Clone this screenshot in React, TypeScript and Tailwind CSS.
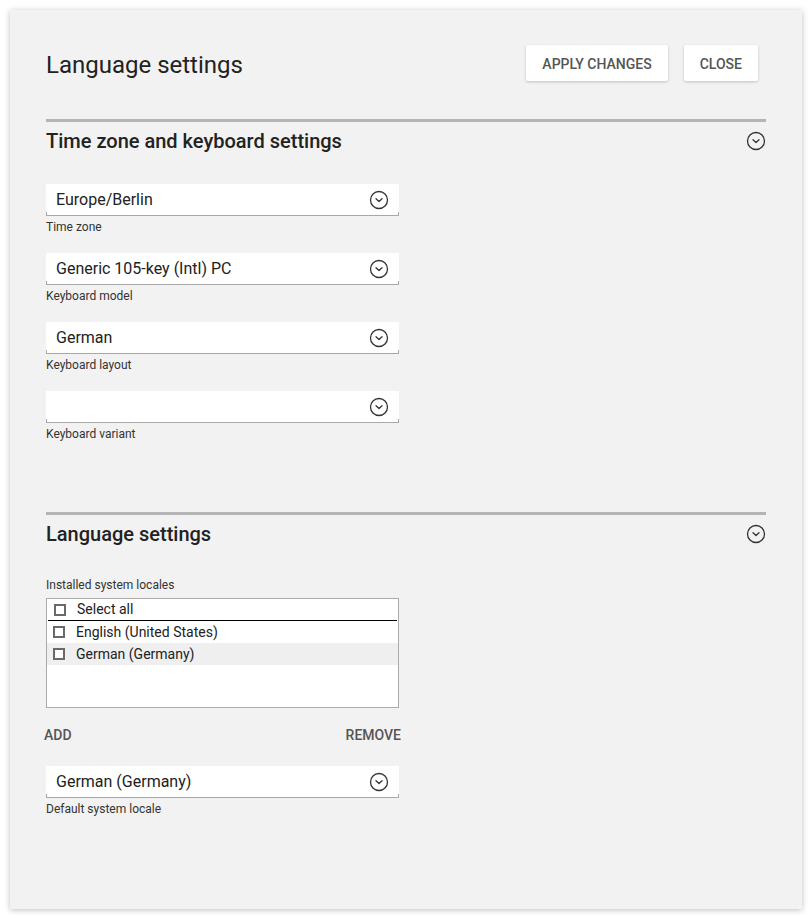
import React from "react";

function ChevronCircle() {
  return (
    <svg width="20" height="20" viewBox="0 0 20 20" fill="none">
      <circle cx="10" cy="10" r="8.5" stroke="#333" strokeWidth="1.3" />
      <path d="M7 8.8 L10 11.6 L13 8.8" stroke="#333" strokeWidth="1.3" strokeLinecap="round" strokeLinejoin="round" />
    </svg>
  );
}

function Select({ value, label }: { value: string; label: string }) {
  return (
    <div className="flex flex-col w-[353px]">
      <div className="flex flex-col bg-white">
        <div className="flex items-center justify-between h-[28px] pt-[3px] pl-[10px] pr-[10px] text-[16px] text-[#222]">
          <span>{value}</span>
          <ChevronCircle />
        </div>
        <div className="h-[4px] border-x border-b border-[#a8a8a8]" />
      </div>
      <div className="mt-[3px] h-4 text-[12px] leading-4 text-[#333]">{label}</div>
    </div>
  );
}

function SectionHeader({ title }: { title: string }) {
  return (
    <div className="flex flex-col">
      <div className="h-[3px] bg-[#b5b5b5]" />
      <div className="flex items-center justify-between h-[38px]">
        <span className="text-[20px] font-medium text-[#222]">{title}</span>
        <ChevronCircle />
      </div>
    </div>
  );
}

function Checkbox() {
  return <div className="w-[12px] h-[12px] border-2 border-[#6a6a6a] bg-white" />;
}

function LocaleRow({ text, selected, divider }: { text: string; selected?: boolean; divider?: boolean }) {
  return (
    <div
      className={`flex items-center h-[22px] pl-[6px] gap-[11px] text-[14px] text-[#222] ${
        selected ? "bg-[#efefef]" : ""
      } ${divider ? "border-b border-black mx-[1px] pl-[5px]" : ""}`}
    >
      <Checkbox />
      <span>{text}</span>
    </div>
  );
}

function TopButton({ children }: { children: React.ReactNode }) {
  return (
    <button className="h-9 px-4 pt-[2px] bg-white rounded-[2px] shadow-[0_1px_3px_rgba(0,0,0,0.2)] text-[14px] font-medium text-[#555]">
      {children}
    </button>
  );
}

export default function App() {
  return (
    <div className="bg-white min-h-[919px] p-[10px] font-['Roboto',sans-serif]">
      <div className="w-[792px] h-[899px] bg-[#f2f2f2] shadow-[0_1px_6px_rgba(0,0,0,0.25)] pt-[35px] px-9">
        <div className="flex items-center justify-between h-9 pr-2">
          <h1 className="pt-[3px] text-[24px] text-[#222]">Language settings</h1>
          <div className="flex gap-4">
            <TopButton>APPLY CHANGES</TopButton>
            <TopButton>CLOSE</TopButton>
          </div>
        </div>

        <div className="mt-[38px]">
          <SectionHeader title="Time zone and keyboard settings" />
        </div>

        <div className="mt-[24px] flex flex-col gap-[18px]">
          <Select value="Europe/Berlin" label="Time zone" />
          <Select value="Generic 105-key (Intl) PC" label="Keyboard model" />
          <Select value="German" label="Keyboard layout" />
          <Select value="" label="Keyboard variant" />
        </div>

        <div className="mt-[70px]">
          <SectionHeader title="Language settings" />
        </div>

        <div className="mt-[24px] w-[353px]">
          <div className="text-[12px] leading-4 text-[#333]">Installed system locales</div>
          <div className="mt-[5px] h-[110px] bg-white border border-[#aaa]">
            <LocaleRow text="Select all" divider />
            <LocaleRow text="English (United States)" />
            <LocaleRow text="German (Germany)" selected />
          </div>
          <div className="flex justify-between mx-[-2px] mt-[16px] h-[22px] items-center text-[14px] font-medium text-[#555]">
            <button>ADD</button>
            <button>REMOVE</button>
          </div>
          <div className="mt-[20px]">
            <Select value="German (Germany)" label="Default system locale" />
          </div>
        </div>
      </div>
    </div>
  );
}
